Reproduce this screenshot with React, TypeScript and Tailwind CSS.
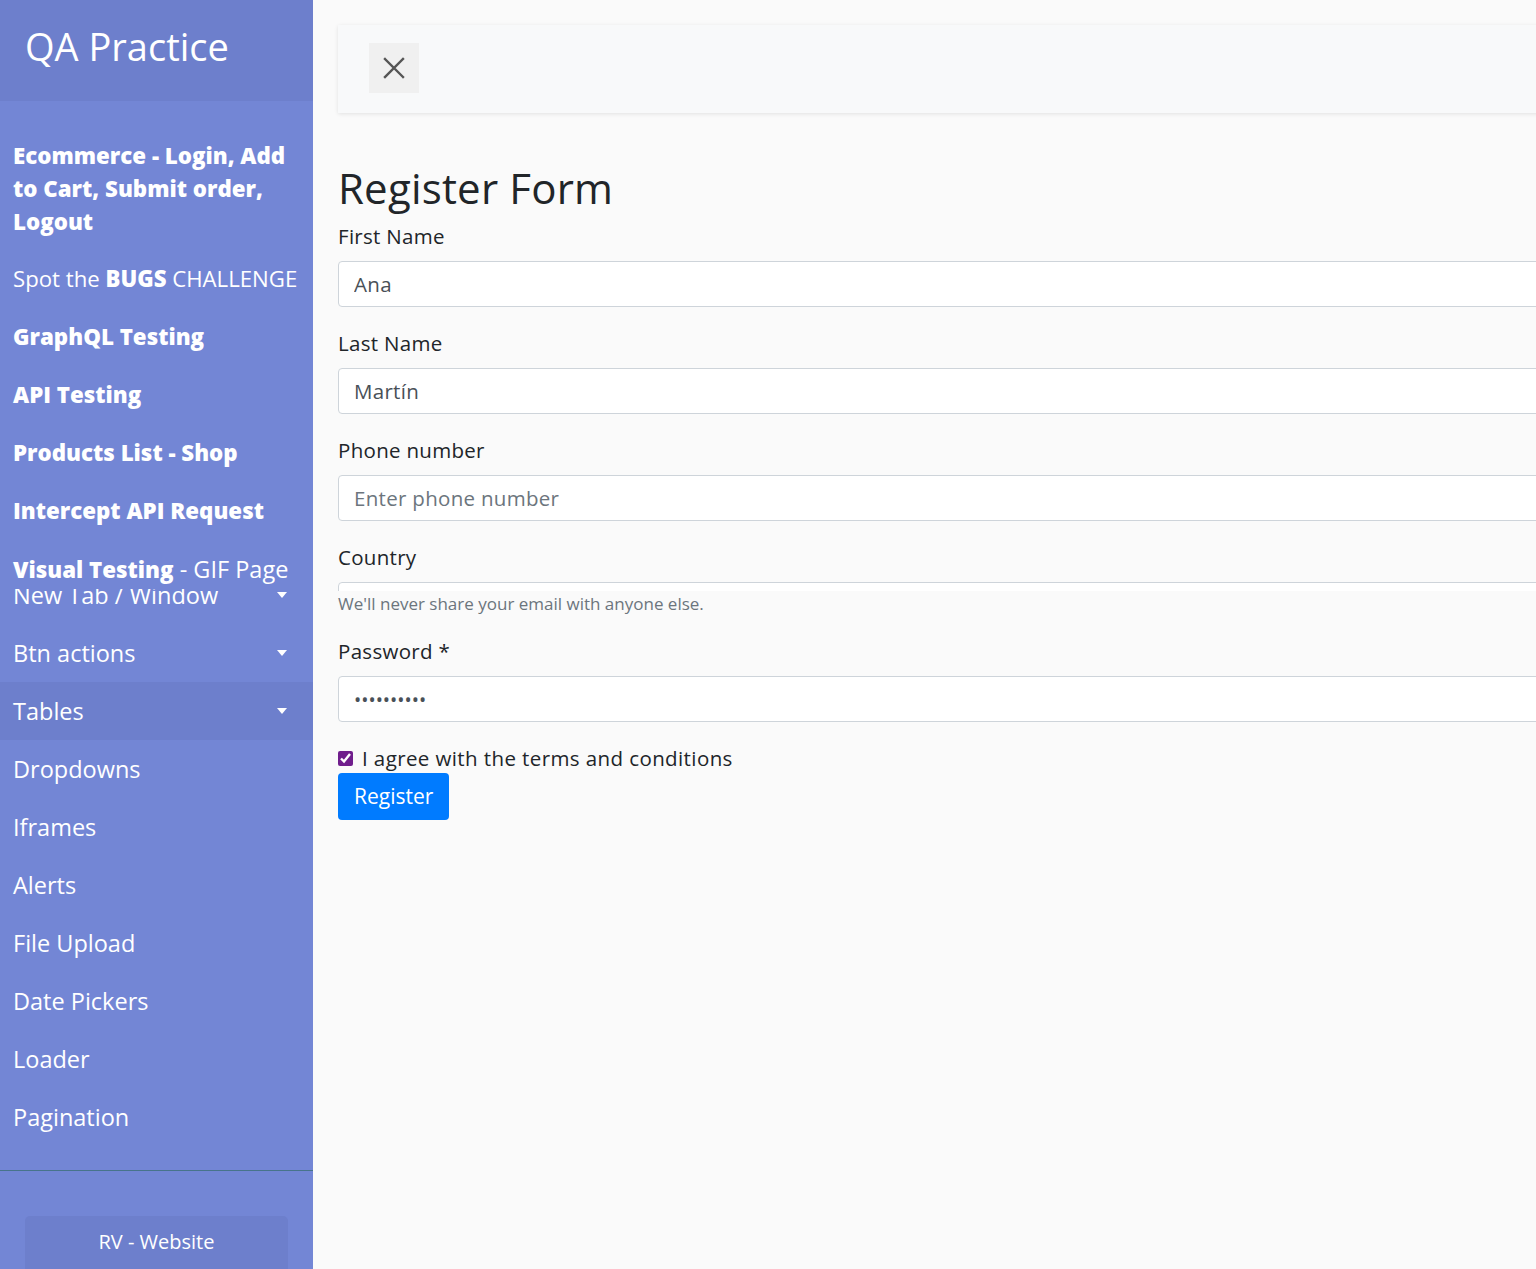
import React from "react";

const Caret = () => (
  <span className="w-0 h-0 border-l-[5px] border-r-[5px] border-t-[6px] border-l-transparent border-r-transparent border-t-white" />
);

const simpleItems = [
  "Dropdowns",
  "Iframes",
  "Alerts",
  "File Upload",
  "Date Pickers",
  "Loader",
  "Pagination",
];

const Sidebar = () => {
  return (
    <nav className="w-[313px] shrink-0 bg-[#7386D5] text-white h-full flex flex-col">
      <div className="h-[101px] shrink-0 bg-[#6D7FCC] pl-[25px] pt-[20px]">
        <h3 className="text-[38px] leading-[52px] font-normal">QA Practice</h3>
      </div>

      <ul className="shrink-0 pt-[26px] pb-[24px] border-b border-[#47748b] text-[23.5px]">
        <li className="px-[13px] py-[12px] leading-[33px] text-[22.3px] font-extrabold">
          Ecommerce - Login, Add to Cart, Submit order, Logout
        </li>
        <li className="px-[13px] py-[12px] leading-[34px] text-[22.2px] font-normal whitespace-nowrap">
          Spot the <span className="font-extrabold">BUGS</span> CHALLENGE
        </li>
        <li className="px-[13px] py-[12px] leading-[34px] text-[22.3px] font-extrabold">GraphQL Testing</li>
        <li className="px-[13px] py-[12px] leading-[34px] text-[22.3px] font-extrabold">API Testing</li>
        <li className="px-[13px] py-[12px] leading-[34px] text-[22.3px] font-extrabold">Products List - Shop</li>
        <li className="px-[13px] py-[12px] leading-[34px] text-[22.3px] font-extrabold">Intercept API Request</li>
        <li className="relative z-10 h-[49px] overflow-hidden bg-[#7386D5] px-[13px] pt-[12px] leading-[34px] font-normal whitespace-nowrap">
          <span className="font-extrabold text-[22.3px]">Visual Testing</span> - GIF Page
        </li>
        <li className="mt-[-23px] px-[13px] pr-[26px] py-[12px] leading-[34px] font-normal flex items-center justify-between">
          <span>New Tab / Window</span>
          <Caret />
        </li>
        <li className="px-[13px] pr-[26px] py-[12px] leading-[34px] font-normal flex items-center justify-between">
          <span>Btn actions</span>
          <Caret />
        </li>
        <li className="px-[13px] pr-[26px] py-[12px] leading-[34px] font-normal flex items-center justify-between bg-[#6D7FCC]">
          <span>Tables</span>
          <Caret />
        </li>
        {simpleItems.map((item) => (
          <li key={item} className="px-[13px] py-[12px] leading-[34px] font-normal">
            {item}
          </li>
        ))}
      </ul>

      <div className="shrink-0 px-[25px] pt-[45px]">
        <div className="bg-[#6D7FCC] rounded-[5px] h-[60px] pt-[12px] text-center text-[20px] leading-[28px] font-normal">
          RV - Website
        </div>
      </div>
    </nav>
  );
};

const Field = ({
  label,
  value,
  placeholder,
}: {
  label: string;
  value?: string;
  placeholder?: string;
}) => (
  <div className="mb-[22px]">
    <label className="block text-[20.5px] tracking-[0.3px] leading-[29px] mb-[10px] text-[#212529]">{label}</label>
    <input
      type="text"
      readOnly
      defaultValue={value}
      placeholder={placeholder}
      className="block w-full h-[46px] px-[15px] bg-white border border-[#ced4da] rounded-[4px] text-[20.5px] tracking-[0.3px] text-[#495057] placeholder:text-[#6c757d] outline-none"
    />
  </div>
);

export default function App() {
  return (
    <div className="flex h-[1269px] w-[1536px] overflow-hidden font-['Open_Sans',sans-serif]">
      <Sidebar />
      <main className="flex-1 min-w-0 overflow-hidden bg-[#fafafa] pl-[25px] pt-[25px]">
        <div className="w-[1400px]">
          <div className="h-[88px] bg-[#f8f9fa] shadow-[0_1px_4px_rgba(0,0,0,0.1)] pl-[31px] pt-[18px]">
            <button className="w-[50px] h-[50px] bg-[#f0f0f0] flex items-center justify-center">
              <svg width="24" height="24" viewBox="0 0 24 24" fill="none" stroke="#555" strokeWidth="2.4" strokeLinecap="square">
                <path d="M3 3 L21 21 M21 3 L3 21" />
              </svg>
            </button>
          </div>

          <h2 className="mt-[51px] mb-[10px] text-[42px] tracking-[0.2px] leading-[48px] text-[#212529] font-normal">Register Form</h2>

          <Field label="First Name" value="Ana" />
          <Field label="Last Name" value="Martín" />
          <Field label="Phone number" placeholder="Enter phone number" />

          <div>
            <label className="block text-[20.5px] tracking-[0.3px] leading-[29px] mb-[10px] text-[#212529]">Country</label>
            <div className="h-[9px] overflow-hidden">
              <div className="h-[46px] bg-white border border-[#ced4da] rounded-[4px]" />
            </div>
            <small className="block mt-[1px] text-[17px] leading-[24px] text-[#6c757d]">
              We'll never share your email with anyone else.
            </small>
          </div>

          <div className="mt-[21px] mb-[22px]">
            <label className="block text-[20.5px] tracking-[0.3px] leading-[29px] mb-[10px] text-[#212529]">Password *</label>
            <input
              type="password"
              readOnly
              defaultValue="1234567890"
              className="block w-full h-[46px] px-[15px] bg-white border border-[#ced4da] rounded-[4px] text-[19.2px] text-[#495057] outline-none"
            />
          </div>

          <div className="flex items-center h-[29px]">
            <input type="checkbox" defaultChecked className="w-[15px] h-[15px] accent-[#6f1d8c] m-0" />
            <label className="ml-[9px] text-[20.5px] tracking-[0.4px] leading-[29px] text-[#212529]">
              I agree with the terms and conditions
            </label>
          </div>
          <button className="h-[47px] px-[16px] bg-[#007bff] text-white text-[21px] rounded-[4px]">
            Register
          </button>
        </div>
      </main>
    </div>
  );
}
